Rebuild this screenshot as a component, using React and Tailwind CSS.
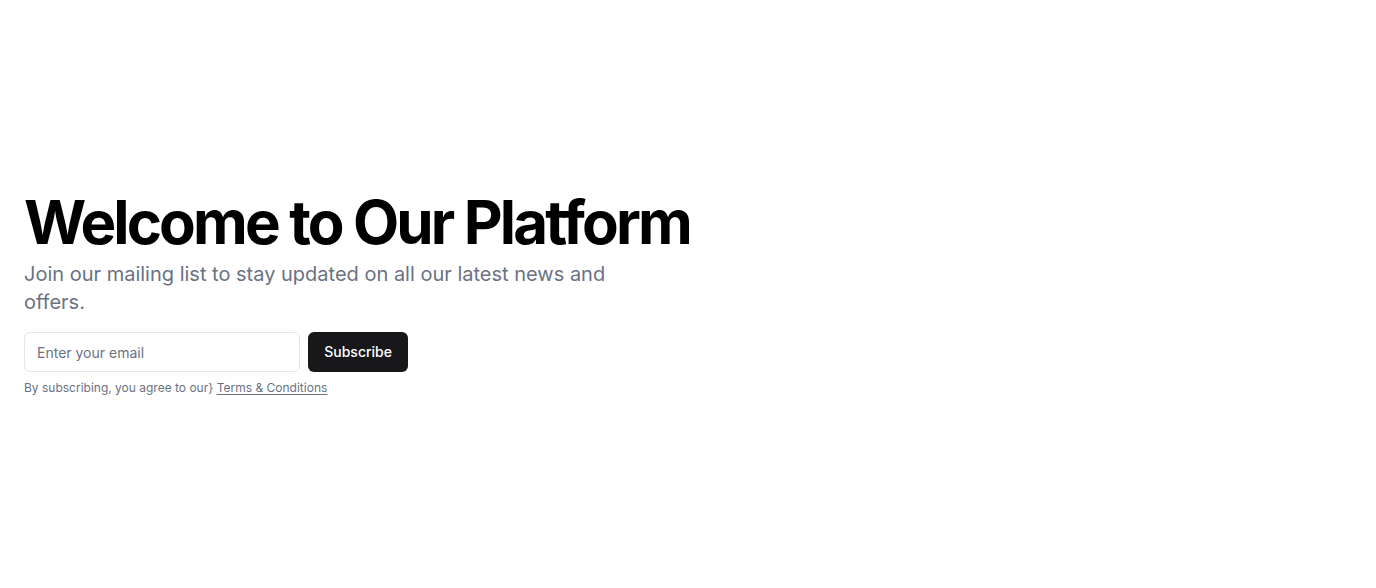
export default function App() {
  return (
    <section className="w-full min-h-[588px] flex items-center bg-white" style={{ fontFamily: "Inter, 'Noto Sans', sans-serif" }}>
      <div className="w-full px-6">
        <div className="flex flex-col items-start space-y-4">
          <div className="space-y-2">
            <h1 className="text-6xl/none font-bold tracking-[-0.0477em] text-black">Welcome to Our Platform</h1>
            <p className="max-w-[600px] text-xl text-gray-500">
              Join our mailing list to stay updated on all our latest news and offers.
            </p>
          </div>
          <div className="w-full max-w-sm space-y-2">
            <form className="flex gap-2">
              <input
                type="email"
                placeholder="Enter your email"
                className="flex-1 h-10 min-w-0 rounded-md border border-gray-200 bg-white px-3 text-sm placeholder:text-gray-500 outline-none"
              />
              <button type="submit" className="h-10 rounded-md bg-[#18181b] px-4 text-sm font-medium text-white">
                Subscribe
              </button>
            </form>
            <p className="text-xs text-gray-500">
              By subscribing, you agree to our{"}"} <a href="#" className="underline underline-offset-2">Terms &amp; Conditions</a>
            </p>
          </div>
        </div>
      </div>
    </section>
  );
}
